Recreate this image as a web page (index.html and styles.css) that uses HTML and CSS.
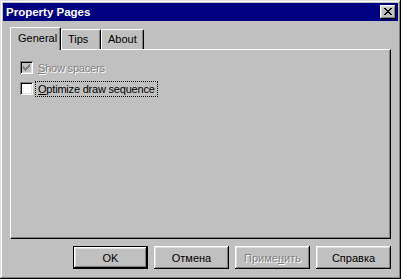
FILE: index.html
```html
<!DOCTYPE html>
<html lang="ru">
<head>
  <meta charset="UTF-8" />
  <title>Property Pages</title>
  <link rel="stylesheet" href="styles.css">
</head>
<body>

<div class="window">
  <div class="titlebar">
    <span class="title">Property Pages</span>
    <button class="close">
      <svg width="8" height="7" viewBox="0 0 8 7" shape-rendering="crispEdges">
        <path d="M0 0h2v1h-2zM6 0h2v1h-2zM1 1h2v1h-2zM5 1h2v1h-2zM2 2h4v1h-4zM3 3h2v1h-2zM2 4h4v1h-4zM1 5h2v1h-2zM5 5h2v1h-2zM0 6h2v1h-2zM6 6h2v1h-2z" fill="#000"/>
      </svg>
    </button>
  </div>

  <div class="content">
    <div class="tabs">
      <div class="tab active">General</div>
      <div class="tab">Tips</div>
      <div class="tab">About</div>
    </div>

    <div class="panel">
      <div class="check disabled">
        <span class="box">
          <svg width="7" height="7" viewBox="0 0 7 7" shape-rendering="crispEdges">
            <path d="M6 0h1v3h-1zM5 1h1v3h-1zM4 2h1v3h-1zM3 3h1v3h-1zM2 4h1v3h-1zM1 3h1v3h-1zM0 2h1v3h-1z" fill="#808080"/>
          </svg>
        </span>
        <span class="label"><u>S</u>how spacers</span>
      </div>
      <div class="check">
        <span class="box"></span>
        <span class="label focus"><u>O</u>ptimize draw sequence</span>
      </div>
    </div>

    <div class="buttons">
      <button class="btn default">OK</button>
      <button class="btn">Отмена</button>
      <button class="btn" disabled>Приме<u>н</u>ить</button>
      <button class="btn">Справка</button>
    </div>
  </div>
</div>

</body>
</html>
```

FILE: styles.css
```css
body {
  margin: 0;
  font-family: "Liberation Sans", Arial, sans-serif;
  font-size: 11px;
  background: #c0c0c0;
}

.window {
  width: 401px;
  height: 279px;
  box-sizing: border-box;
  padding: 3px;
  background: #c0c0c0;
  box-shadow: inset -1px -1px #000, inset 1px 1px #dfdfdf,
              inset -2px -2px #808080, inset 2px 2px #fff;
  display: flex;
  flex-direction: column;
}

.titlebar {
  height: 18px;
  background: #000080;
  display: flex;
  align-items: center;
  justify-content: space-between;
  padding: 0 2px 0 3px;
}

.title {
  color: #fff;
  font-weight: bold;
  font-size: 11.5px;
}

.close {
  width: 16px;
  height: 14px;
  padding: 0;
  border: none;
  background: #c0c0c0;
  box-shadow: inset -1px -1px #000, inset 1px 1px #fff,
              inset -2px -2px #808080, inset 2px 2px #dfdfdf;
  display: flex;
  align-items: center;
  justify-content: center;
}

.close svg {
  display: block;
  margin: 0 0 1px 0;
}

.content {
  flex: 1;
  display: flex;
  flex-direction: column;
  padding: 6px 7px 7px 7px;
}

.tabs {
  display: flex;
  align-items: flex-end;
  height: 22px;
  position: relative;
  z-index: 1;
}

.tab {
  height: 20px;
  box-sizing: border-box;
  padding: 3px 6px 0 6px;
  background: #c0c0c0;
  border-top: 1px solid #fff;
  border-left: 1px solid #fff;
  border-right: 1px solid #000;
  border-radius: 2px 2px 0 0;
  box-shadow: inset -1px 0 #808080;
}

.tab:nth-child(2) { width: 40px; }
.tab:nth-child(3) { width: 43px; }

.tab.active {
  width: 51px;
  height: 23px;
  padding-top: 4px;
  margin-bottom: -1px;
  padding-left: 7px;
}

.panel {
  flex: 1;
  box-sizing: border-box;
  border-top: 1px solid #fff;
  border-left: 1px solid #fff;
  border-right: 1px solid #000;
  border-bottom: 1px solid #000;
  box-shadow: inset -1px -1px #808080;
  padding: 11px 0 0 9px;
  display: flex;
  flex-direction: column;
  gap: 8px;
}

.check {
  display: flex;
  align-items: center;
  height: 13px;
}

.box {
  width: 13px;
  height: 13px;
  box-sizing: border-box;
  background: #fff;
  box-shadow: inset 1px 1px #808080, inset -1px -1px #fff,
              inset 2px 2px #000, inset -2px -2px #dfdfdf;
  display: flex;
  align-items: center;
  justify-content: center;
}

.check.disabled .box {
  background: #c0c0c0;
}

.label {
  margin-left: 3px;
  padding: 1px 2px;
  letter-spacing: -0.2px;
}

.check.disabled .label {
  color: #808080;
  text-shadow: 1px 1px #fff;
}

.label.focus {
  outline: 1px dotted #000;
}

.buttons {
  display: flex;
  justify-content: flex-end;
  gap: 6px;
  margin-top: 7px;
}

.btn {
  width: 75px;
  height: 23px;
  padding: 0;
  border: none;
  background: #c0c0c0;
  font-family: "Liberation Sans", Arial, sans-serif;
  font-size: 11px;
  font-weight: normal;
  color: #000;
  box-shadow: inset -1px -1px #000, inset 1px 1px #fff,
              inset -2px -2px #808080, inset 2px 2px #dfdfdf;
}

.btn.default {
  box-shadow: inset 0 0 0 1px #000, inset -2px -2px #000, inset 2px 2px #fff,
              inset -3px -3px #808080, inset 3px 3px #dfdfdf;
}

.btn:disabled {
  color: #808080;
  text-shadow: 1px 1px #fff;
}
```
